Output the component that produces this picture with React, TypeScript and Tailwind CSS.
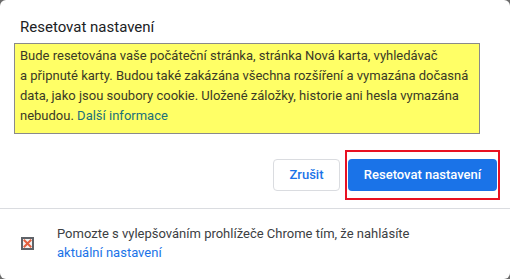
import React from 'react'

function BrokenIcon() {
  return (
    <svg width="13" height="13" viewBox="0 0 13 13" className="shrink-0">
      <rect x="1" y="1" width="11" height="11" fill="#f3f3f3" stroke="#5f6368" strokeWidth="2" />
      <path d="M3.5 3.5 L9.5 9.5 M9.5 3.5 L3.5 9.5" stroke="#e2603f" strokeWidth="2" strokeLinecap="square" />
    </svg>
  )
}

export default function App() {
  return (
    <div className="w-[510px] h-[279px] bg-[#6b6b6b] font-['Roboto','Liberation_Sans',sans-serif]">
      <div className="w-full h-full bg-white rounded-[6px] flex flex-col">
        {/* Title */}
        <h2 className="pl-[20px] pt-[17px] text-[15px] leading-[20px] text-[#202124]">
          Resetovat nastavení
        </h2>

        {/* Highlighted description */}
        <div className="mt-[6px] ml-[14px] w-[466px] h-[91px] bg-[#ffff66] border-[1.5px] border-[#8a8a8a] pl-[5px] pt-[2px]">
          <p className="text-[13px] leading-[20px] text-[#3a3a26]">
            Bude resetována vaše počáteční stránka, stránka Nová karta, vyhledávač
            <br />
            a připnuté karty. Budou také zakázána všechna rozšíření a vymazána dočasná
            <br />
            data, jako jsou soubory cookie. Uložené záložky, historie ani hesla vymazána
            <br />
            nebudou. <span className="text-[#21707a]">Další informace</span>
          </p>
        </div>

        {/* Actions */}
        <div className="flex justify-end items-center gap-[5px] pr-[10px] mt-[17px] h-[48px]">
          <button className="w-[67px] h-[32px] rounded-[4px] border border-[#dadce0] text-[13px] font-medium text-[#1a73e8]">
            Zrušit
          </button>
          <div className="border-2 border-[#e81123] px-[1px] py-[7px]">
            <button className="w-[149px] h-[32px] rounded-[4px] bg-[#1a73e8] text-[13px] font-medium text-white block">
              Resetovat nastavení
            </button>
          </div>
        </div>

        {/* Separator */}
        <div className="mt-[9px] h-px bg-[#dadce0]" />

        {/* Footer */}
        <div className="flex items-center pl-[21px] pt-[15px]">
          <BrokenIcon />
          <p className="ml-[23px] text-[13px] leading-[19px] text-[#3c4043]">
            Pomozte s vylepšováním prohlížeče Chrome tím, že nahlásíte
            <br />
            <span className="text-[#1a73e8]">aktuální nastavení</span>
          </p>
        </div>
      </div>
    </div>
  )
}
